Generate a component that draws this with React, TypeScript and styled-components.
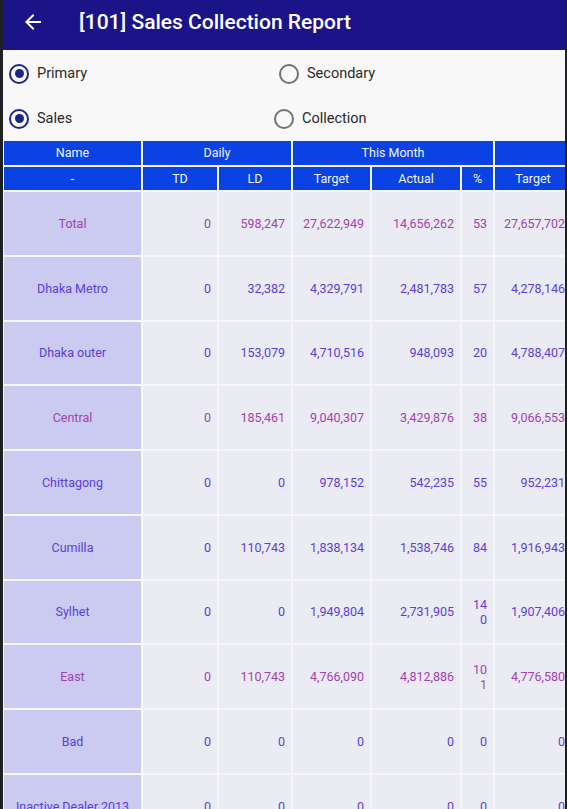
import React from "react";
import styled, { createGlobalStyle } from "styled-components";

const GlobalStyle = createGlobalStyle`
    html, body {
        margin: 0;
        padding: 0;
        background: #1f2023;
        font-family: Roboto, "Noto Sans", "Liberation Sans", sans-serif;
    }
`;

const Screen = styled.div`
    margin-left: 3px;
    width: 562px;
    height: 809px;
    overflow: hidden;
    background: #f8f8f8;
    display: flex;
    flex-direction: column;
`;

const AppBar = styled.div`
    height: 50px;
    flex: none;
    background: #1a1488;
    display: flex;
    align-items: center;
    padding-left: 18px;
    gap: 34px;
    color: #ffffff;
`;

const BackButton = styled.svg`
    width: 24px;
    height: 24px;
    fill: #ffffff;
    margin-top: -6px;
`;

const Title = styled.div`
    font-size: 21px;
    font-weight: 500;
    margin-top: -6px;
`;

const Options = styled.div`
    flex: none;
    height: 91px;
    padding-top: 1px;
    box-sizing: border-box;
    display: flex;
    flex-direction: column;
`;

// one RadioGroup per line; $split = where the second choice starts
const OptionRow = styled.div<{ $split: number }>`
    height: 45px;
    display: grid;
    grid-template-columns: ${(p) => p.$split}px 1fr;
    align-items: center;
`;

const Choice = styled.label<{ $indent?: number }>`
    display: flex;
    align-items: center;
    gap: 8px;
    padding-left: ${(p) => p.$indent ?? 0}px;
    font-size: 14.5px;
    color: #2a2a2a;
`;

const Circle = styled.span<{ $on?: boolean }>`
    width: 20px;
    height: 20px;
    margin-left: -1px;
    box-sizing: border-box;
    border-radius: 50%;
    border: 2.5px solid ${(p) => (p.$on ? "#1c2584" : "#727272")};
    display: flex;
    align-items: center;
    justify-content: center;
    &::after {
        content: "";
        width: 9px;
        height: 9px;
        border-radius: 50%;
        background: ${(p) => (p.$on ? "#1c2584" : "transparent")};
    }
`;

const TableScroll = styled.div`
    flex: 1;
    overflow: hidden;
    background: #f6f6f8;
`;

const Grid = styled.div`
    display: grid;
    grid-template-columns: 137px 74px 72px 77px 88px 31px 76px 80px;
    column-gap: 2px;
    row-gap: 2px;
    padding-left: 1px;
    width: max-content;
    font-size: 12.5px;
`;

const Head = styled.div<{ $span?: number }>`
    grid-column: span ${(p) => p.$span ?? 1};
    height: 23.5px;
    background: #0a42e4;
    color: #f2f4ff;
    display: flex;
    align-items: center;
    justify-content: center;
`;

const NameCell = styled.div<{ $tone: string }>`
    height: 62.75px;
    background: #cbcaf0;
    color: ${(p) => p.$tone};
    display: flex;
    align-items: center;
    justify-content: center;
    text-align: center;
`;

const NumCell = styled.div<{ $tone: string }>`
    height: 62.75px;
    box-sizing: border-box;
    padding: 0 6px;
    background: #ebebf3;
    color: ${(p) => p.$tone};
    display: flex;
    align-items: center;
    justify-content: flex-end;
    text-align: right;
    line-height: 15px;
    word-break: break-all;
`;

const PURPLE = "#a23fb5";
const BLUE = "#5a3fdc";

type Row = { name: string; tone: string; values: string[] };

const rows: Row[] = [
    { name: "Total", tone: PURPLE, values: ["0", "598,247", "27,622,949", "14,656,262", "53", "27,657,702"] },
    { name: "Dhaka Metro", tone: BLUE, values: ["0", "32,382", "4,329,791", "2,481,783", "57", "4,278,146"] },
    { name: "Dhaka outer", tone: BLUE, values: ["0", "153,079", "4,710,516", "948,093", "20", "4,788,407"] },
    { name: "Central", tone: PURPLE, values: ["0", "185,461", "9,040,307", "3,429,876", "38", "9,066,553"] },
    { name: "Chittagong", tone: BLUE, values: ["0", "0", "978,152", "542,235", "55", "952,231"] },
    { name: "Cumilla", tone: BLUE, values: ["0", "110,743", "1,838,134", "1,538,746", "84", "1,916,943"] },
    { name: "Sylhet", tone: BLUE, values: ["0", "0", "1,949,804", "2,731,905", "140", "1,907,406"] },
    { name: "East", tone: PURPLE, values: ["0", "110,743", "4,766,090", "4,812,886", "101", "4,776,580"] },
    { name: "Bad", tone: BLUE, values: ["0", "0", "0", "0", "0", "0"] },
    { name: "Inactive Dealer 2013", tone: BLUE, values: ["0", "0", "0", "0", "0", "0"] },
];

export default function App() {
    return (
        <>
            <GlobalStyle />
            <Screen>
                <AppBar>
                    <BackButton viewBox="0 0 24 24">
                        <path d="M20 11H7.83l5.59-5.59L12 4l-8 8 8 8 1.41-1.41L7.83 13H20v-2z" />
                    </BackButton>
                    <Title>[101] Sales Collection Report</Title>
                </AppBar>
                <Options>
                    <OptionRow $split={277}>
                        <Choice $indent={7}>
                            <Circle $on />
                            Primary
                        </Choice>
                        <Choice>
                            <Circle />
                            Secondary
                        </Choice>
                    </OptionRow>
                    <OptionRow $split={272}>
                        <Choice $indent={7}>
                            <Circle $on />
                            Sales
                        </Choice>
                        <Choice>
                            <Circle />
                            Collection
                        </Choice>
                    </OptionRow>
                </Options>
                <TableScroll>
                    <Grid>
                        <Head>Name</Head>
                        <Head $span={2}>Daily</Head>
                        <Head $span={3}>This Month</Head>
                        <Head $span={2}></Head>
                        <Head>-</Head>
                        <Head>TD</Head>
                        <Head>LD</Head>
                        <Head>Target</Head>
                        <Head>Actual</Head>
                        <Head>%</Head>
                        <Head>Target</Head>
                        <Head>Actual</Head>
                        {rows.map((r) => (
                            <React.Fragment key={r.name}>
                                <NameCell $tone={r.tone}>{r.name}</NameCell>
                                {r.values.map((v, i) => (
                                    <NumCell key={i} $tone={r.tone}>
                                        {v}
                                    </NumCell>
                                ))}
                                <NumCell $tone={r.tone}>{r.values[3]}</NumCell>
                            </React.Fragment>
                        ))}
                    </Grid>
                </TableScroll>
            </Screen>
        </>
    );
}
